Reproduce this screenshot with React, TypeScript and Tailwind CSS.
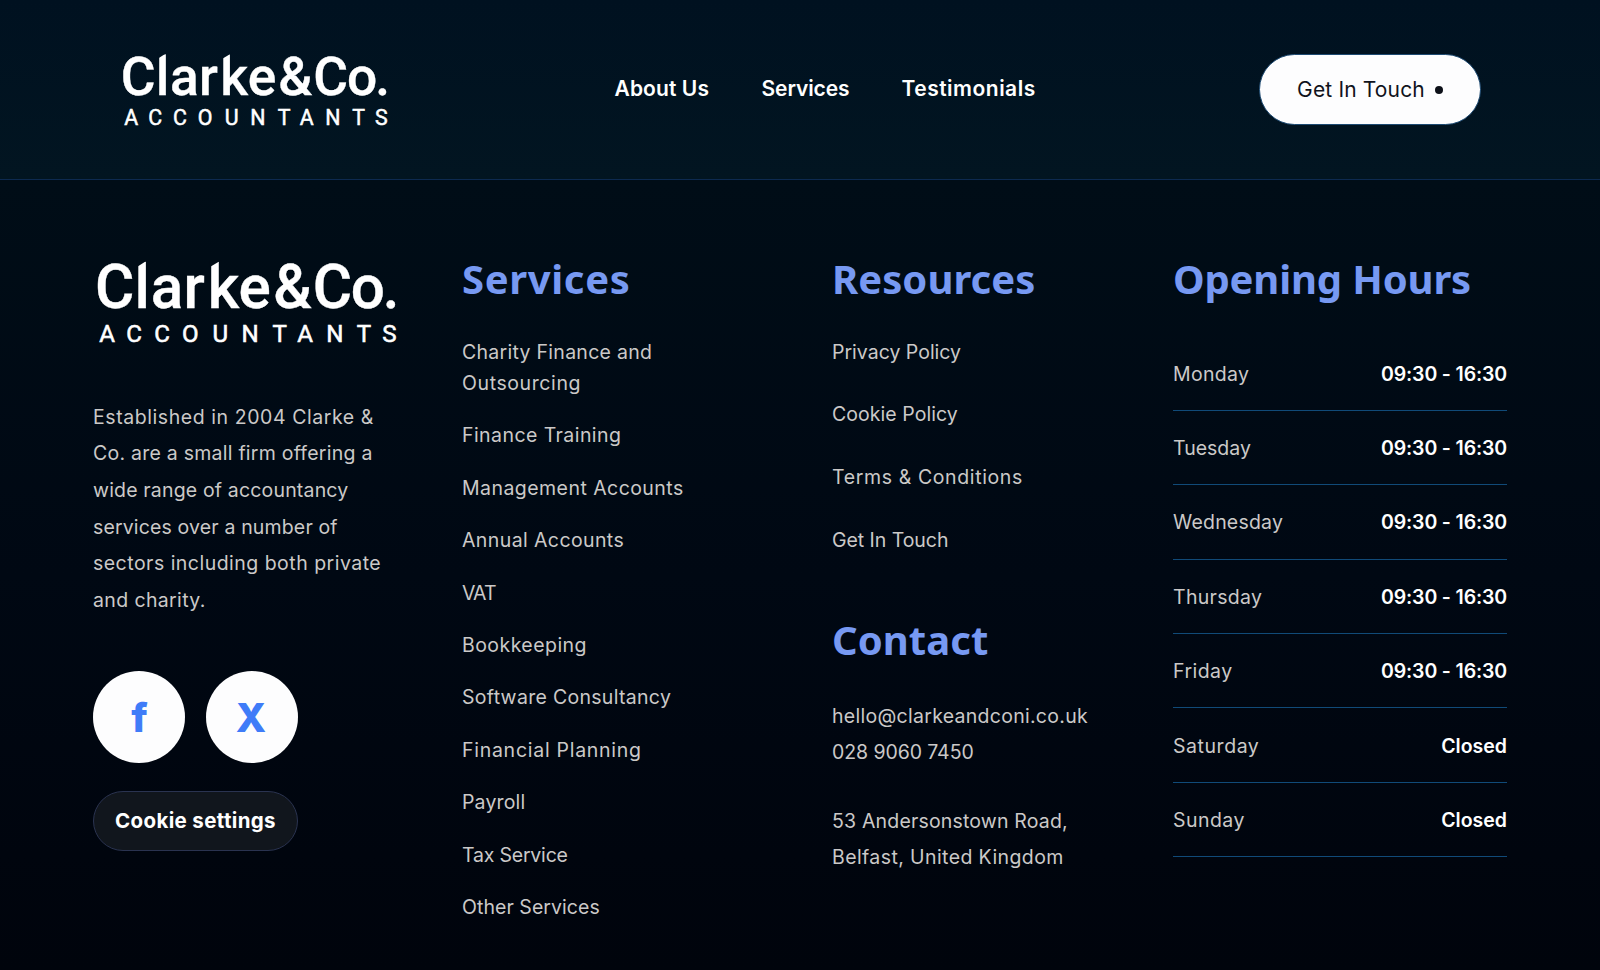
import clsx from "clsx";

const about = [
  { label: "Established in 2004 Clarke &", tracking: "tracking-[0.57px]" },
  { label: "Co. are a small firm offering a", tracking: "tracking-[0.24px]" },
  { label: "wide range of accountancy", tracking: "tracking-[0.17px]" },
  { label: "services over a number of", tracking: "tracking-[0.15px]" },
  { label: "sectors including both private", tracking: "tracking-[0.48px]" },
  { label: "and charity.", tracking: "tracking-[0.37px]" },
];

const services = [
  { label: "Finance Training", tracking: "tracking-[0.43px]" },
  { label: "Management Accounts", tracking: "tracking-[0.45px]" },
  { label: "Annual Accounts", tracking: "tracking-[0.4px]" },
  { label: "VAT", tracking: "tracking-[-1px]" },
  { label: "Bookkeeping", tracking: "tracking-[0.45px]" },
  { label: "Software Consultancy", tracking: "tracking-[0.3px]" },
  { label: "Financial Planning", tracking: "tracking-[0.73px]" },
  { label: "Payroll", tracking: "tracking-[0.15px]" },
  { label: "Tax Service", tracking: "tracking-[-0.2px]" },
  { label: "Other Services", tracking: "tracking-[0.05px]" },
];

const resources = [
  { label: "Privacy Policy", tracking: "tracking-[0px]" },
  { label: "Cookie Policy", tracking: "tracking-[0.05px]" },
  { label: "Terms & Conditions", tracking: "tracking-[0.62px]" },
  { label: "Get In Touch", tracking: "tracking-[-0.05px]" },
];

const hours = [
  { day: "Monday", time: "09:30 - 16:30", tracking: "tracking-[0.3px]" },
  { day: "Tuesday", time: "09:30 - 16:30", tracking: "tracking-[0px]" },
  { day: "Wednesday", time: "09:30 - 16:30", tracking: "tracking-[0.2px]" },
  { day: "Thursday", time: "09:30 - 16:30", tracking: "tracking-[0.3px]" },
  { day: "Friday", time: "09:30 - 16:30", tracking: "tracking-[0.45px]" },
  { day: "Saturday", time: "Closed", tracking: "tracking-[0.55px]" },
  { day: "Sunday", time: "Closed", tracking: "tracking-[0.45px]" },
];

function App() {
  return (
    <div className="flex h-[970px] w-[1600px] flex-col overflow-hidden bg-[#00040e] font-['Inter',sans-serif] text-[19.5px] text-[#cbc9c8]">
      <Header />
      <Footer />
    </div>
  );
}
export default App;

function Header() {
  return (
    <header className="flex h-[180px] shrink-0 items-start justify-between border-b border-[#0d2a50] bg-linear-to-b from-[#001120] to-[#021521] pr-[119px] pl-[118px]">
      <Logo className="mt-[48.5px] h-[85px] w-[277px]" cut="fill-[#001220]" />
      <nav className="mt-[73px] mr-[3px] flex gap-[53px] text-[21px] leading-8 font-semibold text-white">
        <a className="w-[94px] tracking-[0.1px] whitespace-nowrap">About Us</a>
        <a className="w-[87px] tracking-[-0.1px] whitespace-nowrap">Services</a>
        <a className="w-[135px] tracking-[0.5px] whitespace-nowrap">
          Testimonials
        </a>
      </nav>
      <button className="mt-[54px] flex h-[71px] w-[222px] items-center rounded-full border border-[#1d4a72] bg-[#fdfdfe] pl-[37px] text-[21px] whitespace-nowrap text-[#10131c]">
        <span className="w-[128px] tracking-[0.15px]">Get In Touch</span>
        <span className="ml-[10px] size-2 rounded-full bg-[#0d1018]" />
      </button>
    </header>
  );
}

function Footer() {
  return (
    <footer className="flex flex-1 items-start bg-linear-to-b from-[#000d17] via-[#000813] to-[#00040c] pl-[93px]">
      <div className="w-[369px]">
        <Logo
          className="mt-[75.5px] ml-[-1.5px] h-[96px] w-[313px]"
          cut="fill-[#000c16]"
        />
        <div className="mt-[47px] w-[320px] leading-[36.7px] whitespace-nowrap">
          {about.map((line) => (
            <p key={line.label} className={line.tracking}>
              {line.label}
            </p>
          ))}
        </div>
        <div className="mt-[52.5px] flex gap-[20.5px] text-[40px] font-extrabold text-[#3f7cf8]">
          <Social letter="f" className="pt-px pl-px" />
          <Social letter="X" className="pt-px pr-px" />
        </div>
        <button className="mt-[28px] flex h-[60px] w-[205px] items-center justify-center rounded-full border border-[#2a3350] bg-[#11161d] text-[20.5px] font-bold tracking-[0.35px] whitespace-nowrap text-white">
          Cookie settings
        </button>
      </div>

      <div className="w-[370px]">
        <Heading className="mt-[71px] tracking-[0.65px]">Services</Heading>
        <ul className="mt-[29.5px] flex w-[240px] flex-col gap-[20.9px] leading-[31.5px]">
          <li>
            <span className="tracking-[0.28px]">Charity Finance and</span>
            <br />
            <span className="tracking-[0.6px]">Outsourcing</span>
          </li>
          {services.map((item) => (
            <li key={item.label} className={item.tracking}>
              {item.label}
            </li>
          ))}
        </ul>
      </div>

      <div className="w-[341px]">
        <Heading className="mt-[71px] tracking-[0.05px]">Resources</Heading>
        <ul className="mt-[29.5px] flex flex-col gap-[31.4px] leading-[31.5px]">
          {resources.map((item) => (
            <li key={item.label} className={item.tracking}>
              {item.label}
            </li>
          ))}
        </ul>
        <Heading className="mt-[55.5px] tracking-[0.05px]">Contact</Heading>
        <div className="mt-[29.5px] leading-[36.7px] whitespace-nowrap">
          <p className="tracking-[0.28px]">hello@clarkeandconi.co.uk</p>
          <p className="tracking-[-0.08px]">028 9060 7450</p>
          <p className="mt-[31.5px] tracking-[0.18px]">
            53 Andersonstown Road,
          </p>
          <p className="tracking-[0.4px]">Belfast, United Kingdom</p>
        </div>
      </div>

      <div className="w-[334px]">
        <Heading className="mt-[71px] tracking-[-0.15px]">
          Opening Hours
        </Heading>
        <ul className="mt-[29.5px]">
          {hours.map((row) => (
            <li
              key={row.day}
              className="flex h-[74.4px] items-center justify-between border-b border-[#104a78] pt-[2px]"
            >
              <span className={row.tracking}>{row.day}</span>
              <span
                className={clsx(
                  "font-semibold text-white",
                  row.time !== "Closed" && "tracking-[-0.15px]"
                )}
              >
                {row.time}
              </span>
            </li>
          ))}
        </ul>
      </div>
    </footer>
  );
}

function Heading({
  className,
  children,
}: {
  className: string;
  children: React.ReactNode;
}) {
  return (
    <h2
      className={clsx(
        "font-['Noto_Sans','Open_Sans',sans-serif] text-[40px] leading-[56px] font-bold whitespace-nowrap text-[#7799f2]",
        className
      )}
    >
      {children}
    </h2>
  );
}

function Social({ letter, className }: { letter: string; className: string }) {
  return (
    <a
      className={clsx(
        "flex size-[92px] items-center justify-center rounded-full bg-[#fdfdfe]",
        className
      )}
    >
      {letter}
    </a>
  );
}

function Logo({ className, cut }: { className: string; cut: string }) {
  return (
    <svg viewBox="115 55 831 255" className={clsx("overflow-visible", className)}>
      <g className="fill-white font-['Roboto',sans-serif] font-medium">
        <text
          x="123 228 271 358 422 504 596 701 802 887"
          y="192"
          fontSize="160"
          className="stroke-white stroke-1"
        >
          Clarke&amp;Co.
        </text>
        <text
          x="134 206 280 354 435 512 594 660 737 818 886"
          y="284"
          fontSize="64"
          className="font-normal stroke-white stroke-[1.5]"
        >
          ACCOUNTANTS
        </text>
      </g>
      {/* slanted tops of the l and the k */}
      <path d="M234 66H262L234 84Z" className={cut} />
      <path d="M428 66H458L428 84Z" className={cut} />
    </svg>
  );
}
